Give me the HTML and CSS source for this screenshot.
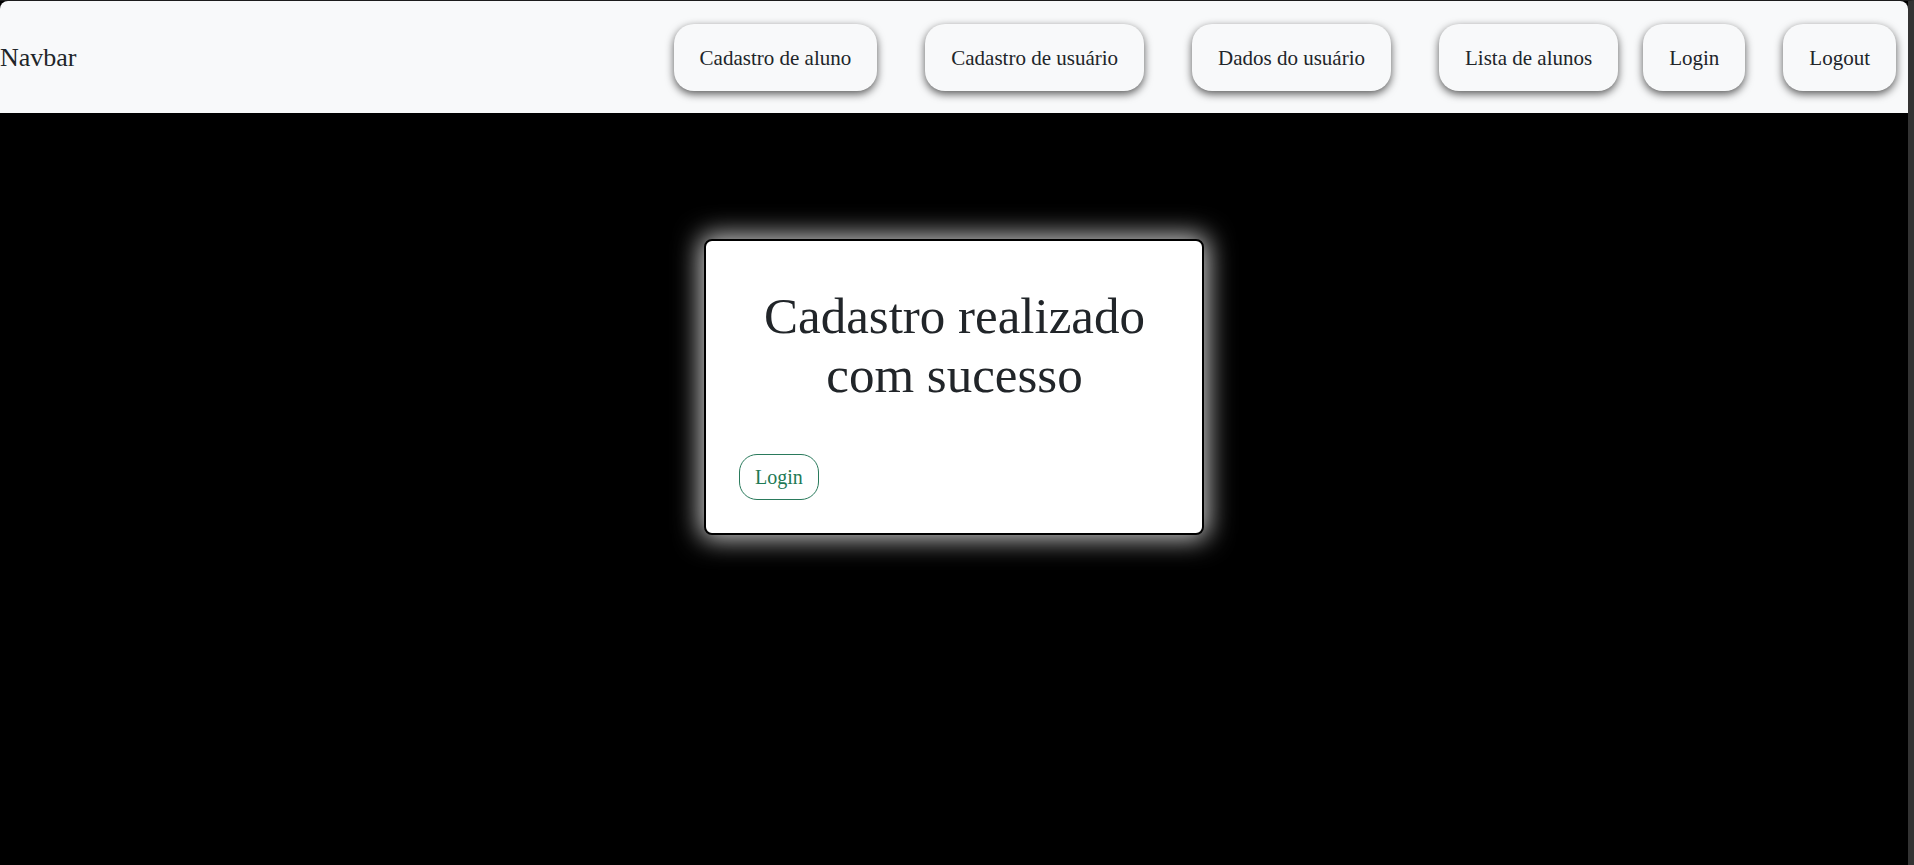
FILE: index.html
```html
<!DOCTYPE html>
<html lang="pt-BR">
<head>
<meta charset="utf-8">
<title>Cadastro realizado</title>
<link rel="stylesheet" href="styles.css">
</head>
<body>
<div class="page">
  <nav class="navbar">
    <a class="brand" href="#">Navbar</a>
    <ul class="nav-list">
      <li class="nav-item"><a class="nav-btn" href="#">Cadastro de aluno</a></li>
      <li class="nav-item"><a class="nav-btn" href="#">Cadastro de usuário</a></li>
      <li class="nav-item"><a class="nav-btn" href="#">Dados do usuário</a></li>
      <li class="nav-item"><a class="nav-btn" href="#">Lista de alunos</a></li>
      <li class="nav-item nav-item-tight"><a class="nav-btn" href="#">Login</a></li>
      <li class="nav-item nav-item-mid"><a class="nav-btn" href="#">Logout</a></li>
    </ul>
  </nav>
  <main class="content">
    <section class="card">
      <h1 class="card-title">Cadastro realizado com sucesso</h1>
      <div class="card-actions">
        <a class="btn-outline" href="#">Login</a>
      </div>
    </section>
  </main>
</div>
</body>
</html>
```
FILE: styles.css
```css
* { box-sizing: border-box; }

html, body {
  margin: 0;
  padding: 0;
  height: 100%;
}

body {
  background: #000;
  font-family: "Liberation Serif", "Times New Roman", serif;
  color: #212529;
}

.page {
  min-height: 865px;
  border-top: 1px solid #1c1c1c;
  border-right: 6px solid #333;
}

.navbar {
  height: 112px;
  background: #f8f9fa;
  border-radius: 8px 8px 0 0;
  display: flex;
  align-items: center;
  justify-content: space-between;
  padding: 0 12px 0 0;
}

.brand {
  font-size: 26px;
  color: #212529;
  text-decoration: none;
  line-height: 1;
  padding-top: 2px;
}

.nav-list {
  list-style: none;
  margin: 0;
  padding: 0;
  display: flex;
  align-items: center;
}

.nav-item { margin-left: 48px; }
.nav-item:first-child { margin-left: 0; }
.nav-item-tight { margin-left: 25px; }
.nav-item-mid { margin-left: 38px; }

.nav-btn {
  display: flex;
  align-items: center;
  height: 67px;
  padding: 2px 26px 0;
  font-size: 21px;
  color: #212529;
  text-decoration: none;
  background: #f8f9fa;
  border-radius: 20px;
  box-shadow: 0 3px 8px rgba(0, 0, 0, 0.65);
  white-space: nowrap;
}

.content {
  display: flex;
  justify-content: center;
  padding-top: 126px;
}

.card {
  width: 500px;
  background: #fff;
  border: 2px solid #000;
  border-radius: 8px;
  padding: 32px 32px 33px 33px;
  box-shadow: 0 0 26px 4px rgba(255, 255, 255, 0.8);
}

.card-title {
  margin: 14px 0 49px;
  font-size: 51px;
  line-height: 59px;
  font-weight: 400;
  text-align: center;
  color: #212529;
}

.card-actions {
  display: flex;
}

.btn-outline {
  display: flex;
  align-items: center;
  height: 46px;
  padding: 1px 15px 0;
  font-size: 20px;
  color: #1e7a55;
  text-decoration: none;
  border: 1px solid #2a7a5c;
  border-radius: 18px;
  background: #fff;
}
```
